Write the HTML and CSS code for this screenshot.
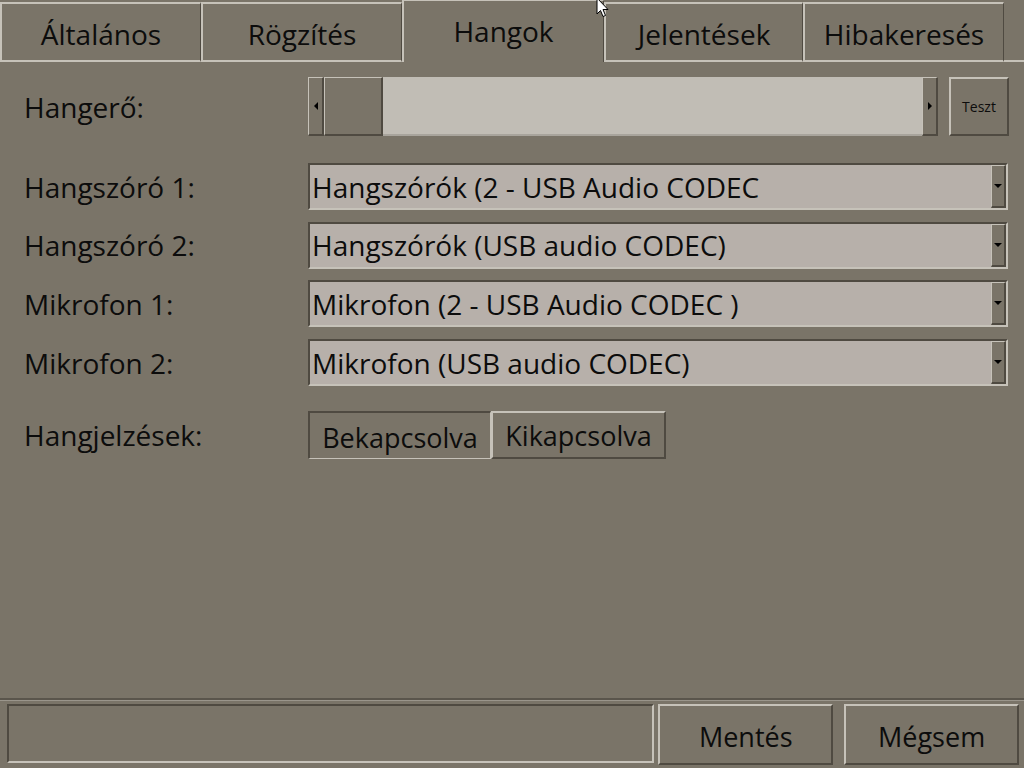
FILE: index.html
```html
<!DOCTYPE html>
<html lang="hu">
<head>
    <meta charset="UTF-8">
    <title>Beállítások - Hangok</title>
    <link rel="stylesheet" href="styles.css">
</head>
<body>
    <div class="window">
        <!-- Tab bar -->
        <div class="tabs">
            <div class="tab t1">Általános</div>
            <div class="tab t2">Rögzítés</div>
            <div class="tab t3 active">Hangok</div>
            <div class="tab t4">Jelentések</div>
            <div class="tab t5">Hibakeresés</div>
            <div class="tab-fill"></div>
        </div>

        <div class="panel">
            <div class="row row-volume">
                <div class="label">Hangerő:</div>
                <div class="slider">
                    <div class="arrow-btn"><span class="tri tri-left"></span></div>
                    <div class="thumb"></div>
                    <div class="track"></div>
                    <div class="arrow-btn"><span class="tri tri-right"></span></div>
                </div>
                <button class="btn btn-small">Teszt</button>
            </div>

            <div class="devices">
                <div class="row">
                    <div class="label">Hangszóró 1:</div>
                    <div class="combo">
                        <span class="combo-text">Hangszórók (2 - USB Audio CODEC</span>
                        <span class="combo-btn"><span class="tri tri-down"></span></span>
                    </div>
                </div>
                <div class="row">
                    <div class="label">Hangszóró 2:</div>
                    <div class="combo">
                        <span class="combo-text">Hangszórók (USB audio CODEC)</span>
                        <span class="combo-btn"><span class="tri tri-down"></span></span>
                    </div>
                </div>
                <div class="row">
                    <div class="label">Mikrofon 1:</div>
                    <div class="combo">
                        <span class="combo-text">Mikrofon (2 - USB Audio CODEC )</span>
                        <span class="combo-btn"><span class="tri tri-down"></span></span>
                    </div>
                </div>
                <div class="row">
                    <div class="label">Mikrofon 2:</div>
                    <div class="combo">
                        <span class="combo-text">Mikrofon (USB audio CODEC)</span>
                        <span class="combo-btn"><span class="tri tri-down"></span></span>
                    </div>
                </div>
            </div>

            <div class="row row-toggle">
                <div class="label">Hangjelzések:</div>
                <div class="toggle">
                    <button class="btn toggle-btn pressed">Bekapcsolva</button>
                    <button class="btn toggle-btn">Kikapcsolva</button>
                </div>
            </div>
        </div>

        <div class="footer">
            <div class="status"></div>
            <button class="btn btn-footer">Mentés</button>
            <button class="btn btn-footer">Mégsem</button>
        </div>

        <!-- mouse pointer -->
        <svg class="cursor" width="14" height="22" viewBox="0 0 14 22">
            <path d="M1 0 L1 16 L4.5 12.5 L7 18.5 L9.5 17.5 L7 11.5 L12 11.5 Z" fill="#fff" stroke="#000" stroke-width="1"/>
        </svg>
    </div>
</body>
</html>
```

FILE: styles.css
```css
/* General Styling */
* {
    box-sizing: border-box;
}

body {
    margin: 0;
    padding: 0;
    font-family: "Open Sans", "Noto Sans", sans-serif;
    color: #0c0c0c;
    background-color: #7a7468;
}

.window {
    position: relative;
    width: 1024px;
    height: 768px;
    display: flex;
    flex-direction: column;
    overflow: hidden;
}

/* Tabs */
.tabs {
    display: flex;
    align-items: flex-end;
    height: 62px;
    flex: none;
}

.tab {
    height: 60px;
    display: flex;
    align-items: center;
    justify-content: center;
    font-size: 28px;
    padding-top: 3px;
    border-top: 2px solid #c6c2b9;
    border-left: 2px solid #c6c2b9;
    border-right: 1px solid #4f4a41;
    border-bottom: 2px solid #c6c2b9;
}

.t1 { width: 201px; }
.t2 { width: 201px; }
.t3 { width: 202px; }
.t4 { width: 199px; }
.t5 { width: 201px; }

.tab.active {
    height: 62px;
    border-top: 1px solid #c6c2b9;
    border-bottom: none;
    padding-top: 0;
    padding-bottom: 1px;
}

.tab-fill {
    flex: 1;
    height: 2px;
    background-color: #c6c2b9;
}

/* Panel */
.panel {
    flex: 1;
    padding-top: 15px;
}

.row {
    display: flex;
    align-items: center;
}

.label {
    width: 308px;
    padding-left: 24px;
    font-size: 28px;
    flex: none;
}

.row-volume {
    height: 59px;
}

.slider {
    width: 630px;
    height: 59px;
    display: flex;
}

.arrow-btn {
    width: 16px;
    height: 59px;
    display: flex;
    align-items: center;
    justify-content: center;
    border-top: 1px solid #c6c2b9;
    border-left: 1px solid #c6c2b9;
    border-right: 2px solid #4f4a41;
    border-bottom: 2px solid #4f4a41;
}

.thumb {
    width: 59px;
    height: 59px;
    border-top: 1px solid #c6c2b9;
    border-left: 1px solid #c6c2b9;
    border-right: 2px solid #4f4a41;
    border-bottom: 2px solid #4f4a41;
}

.track {
    flex: 1;
    background-color: #c1bdb5;
    border-bottom: 2px solid #a8a49c;
}

.tri {
    width: 0;
    height: 0;
    display: block;
}

.tri-left {
    border-top: 4px solid transparent;
    border-bottom: 4px solid transparent;
    border-right: 4px solid #000;
}

.tri-right {
    border-top: 4px solid transparent;
    border-bottom: 4px solid transparent;
    border-left: 4px solid #000;
}

.tri-down {
    border-left: 4px solid transparent;
    border-right: 4px solid transparent;
    border-top: 4px solid #000;
}

.btn {
    font-family: "Open Sans", "Noto Sans", sans-serif;
    color: #0c0c0c;
    background-color: #7a7468;
    padding: 0;
    margin: 0;
    border-top: 2px solid #c6c2b9;
    border-left: 2px solid #c6c2b9;
    border-right: 2px solid #4f4a41;
    border-bottom: 2px solid #4f4a41;
}

.btn-small {
    width: 60px;
    height: 59px;
    margin-left: 11px;
    font-size: 14px;
}

/* Combo boxes */
.devices {
    margin-top: 27px;
    display: flex;
    flex-direction: column;
    gap: 11.7px;
}

.combo {
    width: 700px;
    height: 47px;
    display: flex;
    align-items: center;
    background-color: #b7b0aa;
    border-top: 2px solid #4f4a41;
    border-left: 2px solid #4f4a41;
    border-bottom: 2px solid #c6c2b9;
    border-right: 2px solid #c6c2b9;
}

.combo-text {
    flex: 1;
    padding-left: 2px;
    font-size: 28px;
    white-space: nowrap;
    overflow: hidden;
}

.combo-btn {
    width: 15px;
    height: 43px;
    display: flex;
    align-items: center;
    justify-content: center;
    background-color: #7a7468;
    border-top: 1px solid #c6c2b9;
    border-left: 1px solid #c6c2b9;
    border-right: 2px solid #4f4a41;
    border-bottom: 2px solid #4f4a41;
}

/* Toggle */
.row-toggle {
    margin-top: 25px;
}

.toggle {
    display: flex;
}

.toggle-btn {
    height: 48px;
    font-size: 27px;
    padding: 0 10px;
}

.toggle-btn.pressed {
    width: 183px;
    padding-top: 4px;
    border-top: 2px solid #4f4a41;
    border-left: 2px solid #4f4a41;
    border-right: 1px solid #c6c2b9;
    border-bottom: 1px solid #c6c2b9;
}

.toggle-btn + .toggle-btn {
    width: 175px;
}

/* Footer */
.footer {
    flex: none;
    height: 70px;
    display: flex;
    align-items: flex-start;
    padding: 4px 5px 0 7px;
    border-top: 2px solid #5a554c;
    box-shadow: inset 0 1px 0 #9a958b;
}

.status {
    width: 648px;
    height: 59px;
    margin-right: 4px;
    border-top: 2px solid #4f4a41;
    border-left: 2px solid #4f4a41;
    border-bottom: 2px solid #c6c2b9;
    border-right: 2px solid #c6c2b9;
}

.btn-footer {
    width: 175px;
    height: 61px;
    font-size: 27px;
    padding-top: 4px;
}

.btn-footer + .btn-footer {
    margin-left: 11px;
}

.cursor {
    position: absolute;
    left: 596px;
    top: -2px;
}
```
